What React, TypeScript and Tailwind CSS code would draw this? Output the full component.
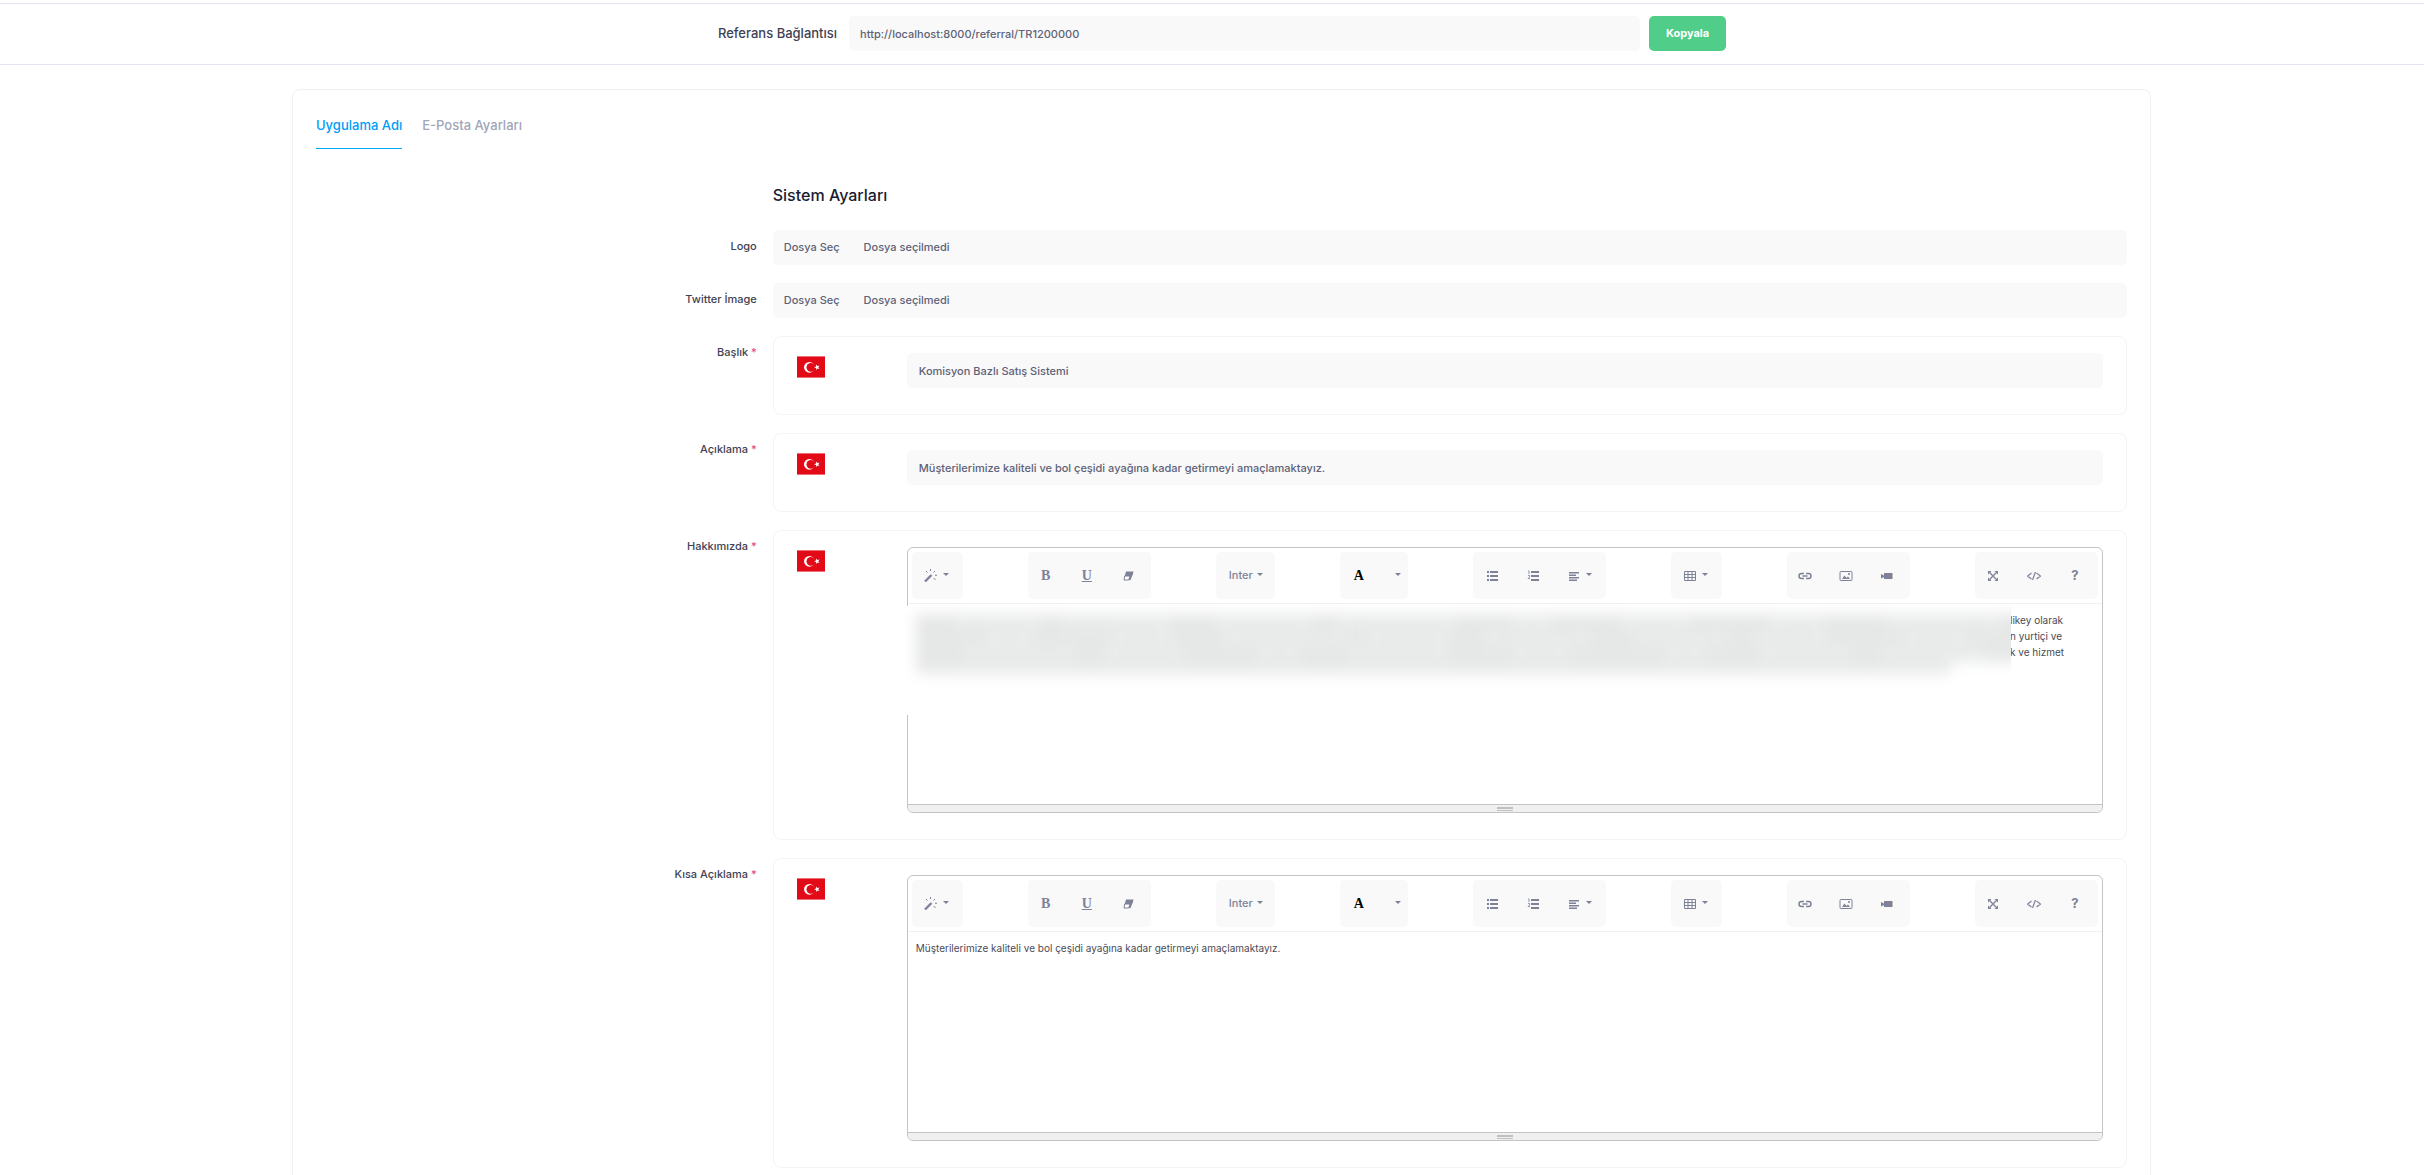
import { useState } from "react";

const flagAlt = "Türkçe";
const aboutText = ["likey olarak", "n yurtiçi ve", "k ve hizmet"];
const summary = "Müşterilerimize kaliteli ve bol çeşidi ayağına kadar getirmeyi amaçlamaktayız.";

// widths of the redacted words, one list per line
const redacted = [
  [38, 60, 24, 82, 46, 70, 30, 90, 54, 20, 66, 48, 76, 34, 58, 88, 26],
  [64, 28, 74, 40, 52, 94, 22, 60, 36, 80, 44, 68, 30, 50, 72, 42, 56],
  [46, 84, 32, 58, 70, 26, 48, 76, 62, 38, 90, 24, 54, 66, 34, 78, 40],
];

function Flag() {
  return (
    <svg className="w-7 h-[22px]" viewBox="0 0 28 22" role="img" aria-label={flagAlt}>
      <rect width="28" height="22" fill="#e30a17" />
      <rect width="28" height="1" fill="#ef7079" />
      <rect y="21" width="28" height="1" fill="#ef7079" />
      <circle cx="12.4" cy="11.3" r="5.4" fill="#fff" />
      <circle cx="13.9" cy="11.3" r="4.4" fill="#e30a17" />
      <path d="M17 11.2l2.1-.7.1-2.1 1.3 1.7 2-.6-1.2 1.8 1.2 1.7-2-.6-1.3 1.7-.1-2.2z" fill="#fff" />
    </svg>
  );
}

function Caret() {
  return (
    <svg className="w-[6px] h-[3px] mb-[3px]" viewBox="0 0 6 3" aria-hidden="true">
      <path d="M0 0h6L3 3z" fill="currentColor" />
    </svg>
  );
}

const iconPaths = {
  wand: (
    <>
      <path d="M1 12.5L7.5 6" stroke="currentColor" strokeWidth="2.4" />
      <path d="M6.5 0v2M2 2l1.5 1.5M11 2L9.5 3.5M11 6.2h2M9.8 9l1.6 1.8" stroke="currentColor" strokeWidth="1" />
    </>
  ),
  eraser: (
    <>
      <path d="M5 2.5h7.500l-1.6 5H3.6z" fill="currentColor" />
      <path d="M3.8 7h5.2l-1.2 4H3z" fill="#fff" stroke="currentColor" strokeWidth="1" />
      <path d="M11.400 3L8.600 11" stroke="currentColor" strokeWidth="2" />
    </>
  ),
  ul: (
    <path
      d="M1 2h2v2H1zM1 6h2v2H1zM1 10h2v2H1zM4 2h8v2H4zM4 6h8v2H4zM4 10h8v2H4z"
      fill="currentColor"
    />
  ),
  ol: (
    <>
      <path d="M4 2h8v2H4zM4 6h8v2H4zM4 10h8v2H4z" fill="currentColor" />
      <path d="M1 2h1v3M1 6.5h1.5v1.5L1 9.5h2" fill="none" stroke="currentColor" strokeWidth=".8" />
    </>
  ),
  align: <path d="M2 3h10v1.5H2zM2 5.5h7v1.5H2zM2 8h10v1.5H2zM2 10.5h8V12H2z" fill="currentColor" />,
  table: <path d="M1.5 2.5h11v9h-11zM1.5 5.5h11M1.5 8.5h11M5 2.5v9M9 2.5v9" fill="none" stroke="currentColor" />,
  link: (
    <path
      d="M6 4.5H3.5a2.5 2.5 0 0 0 0 5H6M8 4.5h2.5a2.5 2.5 0 0 1 0 5H8M4.5 7h5"
      fill="none"
      stroke="currentColor"
      strokeWidth="1.5"
    />
  ),
  picture: (
    <>
      <rect x="1" y="2.5" width="12" height="9" rx="1" fill="none" stroke="currentColor" />
      <path d="M3 10l2.5-3.5L7.5 9 9 7.5l2 2.5z" fill="currentColor" />
      <circle cx="10" cy="5" r="1" fill="currentColor" />
    </>
  ),
  video: <path d="M1 5l3 1.5V4h8.5v6H4V8L1 9.5z" fill="currentColor" />,
  expand: (
    <>
      <path d="M3.5 3.5l7 7M10.5 3.5l-7 7" stroke="currentColor" strokeWidth="1.3" />
      <path d="M2 2h3.5L2 5.5zM12 2v3.5L8.5 2zM12 12H8.5L12 8.5zM2 12V8.5L5.5 12z" fill="currentColor" />
    </>
  ),
  code: (
    <path
      d="M4.5 4L.5 7l4 3M9.5 4l4 3-4 3M8.5 3l-3 8"
      fill="none"
      stroke="currentColor"
      strokeWidth="1.2"
    />
  ),
};

function Icon({ name }: { name: keyof typeof iconPaths }) {
  return (
    <svg className="w-[14px] h-[14px] shrink-0" viewBox="0 0 14 14" aria-hidden="true">
      {iconPaths[name]}
    </svg>
  );
}

const toolGroup = "flex h-[47px] items-center rounded-[5px] bg-[#f9f9f9] text-[#7e8299]";
const tool = "flex h-9 w-9 mr-[5px] items-center justify-center";
const wideTool = "flex h-9 w-[46px] mr-[5px] items-center justify-center gap-[5px] pl-1";

function Toolbar() {
  return (
    <div className="flex flex-wrap justify-between border-b border-[#eff2f5] px-1 pt-1 pb-1">
      <div className={toolGroup}>
        <button className={wideTool} aria-label="Stil"><Icon name="wand" /><Caret /></button>
      </div>
      <div className={toolGroup}>
        <button className={`${tool} font-["Liberation_Serif"] text-[14px] font-bold`}>B</button>
        <button className={`${tool} font-["Liberation_Serif"] text-[14px] font-bold underline`}>U</button>
        <button className={tool} aria-label="Temizle"><Icon name="eraser" /></button>
      </div>
      <div className={toolGroup}>
        <button className="flex h-9 w-[59px] items-center justify-center gap-1 pl-px text-[11px] font-medium">Inter<Caret /></button>
      </div>
      <div className={toolGroup}>
        <button className={`${tool} pl-0.5 font-["Liberation_Serif"] text-[14px] font-bold text-black`}>A</button>
        <button className="flex h-9 w-[27px] items-center justify-end pr-[7px]" aria-label="Renk"><Caret /></button>
      </div>
      <div className={toolGroup}>
        <button className={`${tool} pl-1`} aria-label="Liste"><Icon name="ul" /></button>
        <button className={`${tool} pl-1`} aria-label="Sıralı liste"><Icon name="ol" /></button>
        <button className={wideTool} aria-label="Hizala"><Icon name="align" /><Caret /></button>
      </div>
      <div className={toolGroup}>
        <button className={wideTool} aria-label="Tablo"><Icon name="table" /><Caret /></button>
      </div>
      <div className={toolGroup}>
        <button className={tool} aria-label="Bağlantı"><Icon name="link" /></button>
        <button className={tool} aria-label="Resim"><Icon name="picture" /></button>
        <button className={tool} aria-label="Video"><Icon name="video" /></button>
      </div>
      <div className={toolGroup}>
        <button className={tool} aria-label="Tam ekran"><Icon name="expand" /></button>
        <button className={tool} aria-label="Kod"><Icon name="code" /></button>
        <button className={`${tool} text-[13px] font-bold`}>?</button>
      </div>
    </div>
  );
}

function Editor({ children }: { children: React.ReactNode }) {
  return (
    <div className="relative rounded-md border border-[#c4c4c4] bg-white">
      <Toolbar />
      <div className="h-[200px] px-2 pt-2 text-[10px] leading-4 text-[#4b4b55]">{children}</div>
      <div className="flex h-2 flex-col items-center gap-px rounded-b-md border-t border-[#c4c4c4] bg-[#f0f0f0] pt-0.5">
        <div className="h-0.5 w-4 bg-[#c0c0c0]" />
        <div className="h-px w-4 bg-[#c0c0c0]" />
      </div>
    </div>
  );
}

function Row({ label, id, required, children }: { label: string; id?: string; required?: boolean; children: React.ReactNode }) {
  return (
    <div className="mb-[18px] flex">
      <label htmlFor={id} className="w-1/4 shrink-0 pt-2 pr-3 text-right text-[11px] leading-4 font-medium text-[#3f4254]">
        {label}
        {required && <span className="text-[#f1416c]"> *</span>}
      </label>
      <div className="ml-1 min-w-0 flex-1">{children}</div>
    </div>
  );
}

function LangBox({ children }: { children: React.ReactNode }) {
  return (
    <div className="flex rounded-lg border border-[#f4f4f4] px-[23px] pt-4 pb-[26px]">
      <div className="w-[110px] shrink-0 pt-[3px]"><Flag /></div>
      <div className="min-w-0 flex-1">{children}</div>
    </div>
  );
}

function FileField({ id }: { id: string }) {
  return (
    <div className="flex h-[35px] items-center gap-6 rounded-[5px] bg-[#f9f9f9] px-[11px] text-[11px] font-medium text-[#5e6278]">
      <button id={id}>Dosya Seç</button>
      <span>Dosya seçilmedi</span>
    </div>
  );
}

const inputClass = "h-[35px] w-full rounded-[5px] bg-[#f9f9f9] px-3 text-[11px] font-medium text-[#5e6278] outline-none";

export default function App() {
  const [tab, setTab] = useState(0);
  const tabs = ["Uygulama Adı", "E-Posta Ayarları"];

  return (
    <div className='h-screen overflow-hidden bg-white pt-[3px] font-["Inter",sans-serif]'>
      {/* Referral link */}
      <div className="flex h-[62px] items-center justify-center border-y border-[#e4e6ef] pb-px pl-5">
        <label htmlFor="referral" className="mr-3 text-[13px] font-medium text-[#3f4254]">Referans Bağlantısı</label>
        <input
          id="referral"
          readOnly
          defaultValue="http://localhost:8000/referral/TR1200000"
          className="h-[35px] w-[791px] rounded-[5px] bg-[#f9f9f9] px-[11px] text-[11px] font-medium text-[#5e6278] outline-none"
        />
        <button className="ml-[9px] h-[35px] w-[77px] rounded-[5px] bg-[#50cd89] text-[11px] font-bold text-white">Kopyala</button>
      </div>

      <div className="pt-6 pr-[273px] pl-[292px]">
        <main className="rounded-lg border border-[#f1f1f4] px-[23px] pb-10">
          {/* Tabs */}
          <nav className="flex gap-5 pt-[14px]">
            {tabs.map((name, i) => (
              <button
                key={name}
                onClick={() => setTab(i)}
                className={
                  i === tab
                    ? "h-[45px] border-b border-[#00a8f8] text-[13px] font-medium text-[#009ef7]"
                    : "h-[45px] border-b border-transparent text-[13px] font-medium text-[#a1a5b7]"
                }
              >
                {name}
              </button>
            ))}
          </nav>

          <div className="pt-[35px]">
            <div className="flex">
              <h2 className="mb-6 ml-[25%] pl-1 text-[16px] leading-[22px] font-medium text-[#181c32]">Sistem Ayarları</h2>
            </div>
            <Row label="Logo" id="logo"><FileField id="logo" /></Row>
            <Row label="Twitter İmage" id="twitter"><FileField id="twitter" /></Row>
            <Row label="Başlık" id="title" required>
              <LangBox><input id="title" className={inputClass} defaultValue="Komisyon Bazlı Satış Sistemi" /></LangBox>
            </Row>
            <Row label="Açıklama" id="description" required>
              <LangBox><input id="description" className={inputClass} defaultValue={summary} /></LangBox>
            </Row>
            <Row label="Hakkımızda" required>
              <LangBox>
                <Editor>
                  <div className="flex justify-end pr-[30px]">
                    <p className="w-[54px] whitespace-nowrap">
                      {aboutText.map((line) => (
                        <span key={line} className="block">{line}</span>
                      ))}
                    </p>
                  </div>
                  {/* Redacted part of the text */}
                  <div className="absolute top-[58px] right-[91px] -left-1 h-[109px] overflow-hidden bg-white">
                    <div className="pt-2 pl-3 blur-[7px]">
                      {redacted.map((line, row) => (
                        <div key={row} className="-mr-4 flex h-4 gap-1 bg-[#efefef]">
                          {line.map((w, i) => (
                            <div key={i} className={i % 2 ? "bg-[#e9ebeb]" : "bg-[#e6e7e7]"} style={{ flexGrow: w }} />
                          ))}
                        </div>
                      ))}
                      <div className="mr-[60px] h-3 bg-[#e8e9e9]" />
                    </div>
                  </div>
                </Editor>
              </LangBox>
            </Row>
            <Row label="Kısa Açıklama" required>
              <LangBox><Editor><p>{summary}</p></Editor></LangBox>
            </Row>
          </div>
        </main>
      </div>
    </div>
  );
}
